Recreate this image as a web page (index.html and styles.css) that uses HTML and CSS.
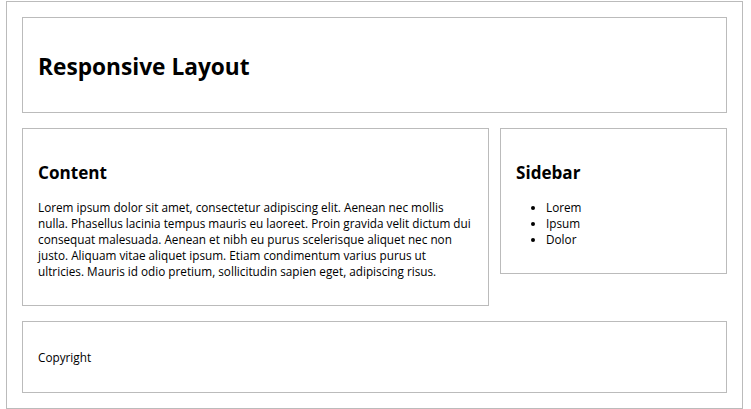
FILE: index.html
```html
<!DOCTYPE html>
<html lang="en">
<head>
<meta charset="utf-8">
<title>Responsive Layout</title>
<link rel="stylesheet" href="styles.css">
</head>
<body>
<div class="container">
  <header class="box header">
    <h1>Responsive Layout</h1>
  </header>
  <div class="main">
    <section class="box content">
      <h2>Content</h2>
      <p>Lorem ipsum dolor sit amet, consectetur adipiscing elit. Aenean nec mollis nulla. Phasellus lacinia tempus mauris eu laoreet. Proin gravida velit dictum dui consequat malesuada. Aenean et nibh eu purus scelerisque aliquet nec non justo. Aliquam vitae aliquet ipsum. Etiam condimentum varius purus ut ultricies. Mauris id odio pretium, sollicitudin sapien eget, adipiscing risus.</p>
    </section>
    <aside class="box sidebar">
      <h2>Sidebar</h2>
      <ul>
        <li>Lorem</li>
        <li>Ipsum</li>
        <li>Dolor</li>
      </ul>
    </aside>
  </div>
  <footer class="box footer">
    <p>Copyright</p>
  </footer>
</div>
</body>
</html>
```
FILE: styles.css
```css
* { box-sizing: border-box; }
body {
  margin: 0;
  font-family: "Open Sans", "Noto Sans CJK KR", sans-serif;
  font-size: 11.75px;
  line-height: 16px;
  color: #000;
  background: #fff;
}
.container {
  width: 737px;
  margin: 1px 0 0 6px;
  padding: 15px;
  border: 1px solid #bbb;
  display: flex;
  flex-direction: column;
  gap: 15px;
}
.box {
  border: 1px solid #bbb;
  padding: 15px;
}
.header h1 {
  margin: 18px 0 14px;
  font-size: 22.7px;
  line-height: 32px;
  font-weight: 700;
}
.main {
  display: grid;
  grid-template-columns: 467px 227px;
  column-gap: 11px;
  align-items: start;
}
h2 {
  margin: 17px 0 14px;
  font-size: 17.1px;
  line-height: 24px;
  font-weight: 700;
}
.content p {
  margin: 0 0 11px;
}
.sidebar ul {
  margin: 0 0 11px;
  padding-left: 30px;
}
.footer p {
  margin: 12px 0;
}
```
